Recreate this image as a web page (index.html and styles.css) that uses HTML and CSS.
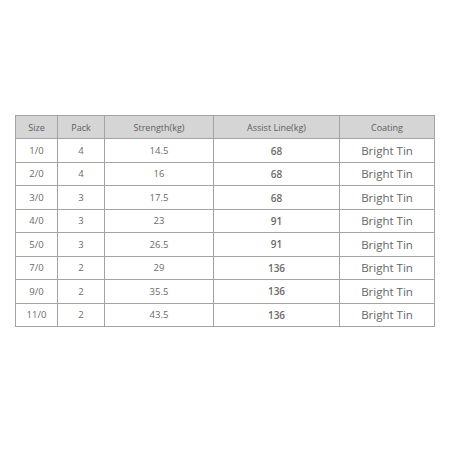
FILE: index.html
```html
<!DOCTYPE html>
<html>
<head>
<meta charset="utf-8">
<link rel="stylesheet" href="styles.css">
</head>
<body>
<div class="page">
<table class="spec">
<colgroup>
<col class="c1"><col class="c2"><col class="c3"><col class="c4"><col class="c5">
</colgroup>
<thead>
<tr><th>Size</th><th>Pack</th><th>Strength(kg)</th><th>Assist Line(kg)</th><th>Coating</th></tr>
</thead>
<tbody>
<tr><td>1/0</td><td>4</td><td>14.5</td><td class="al">68</td><td class="ct">Bright Tin</td></tr>
<tr><td>2/0</td><td>4</td><td>16</td><td class="al">68</td><td class="ct">Bright Tin</td></tr>
<tr><td>3/0</td><td>3</td><td>17.5</td><td class="al">68</td><td class="ct">Bright Tin</td></tr>
<tr><td>4/0</td><td>3</td><td>23</td><td class="al">91</td><td class="ct">Bright Tin</td></tr>
<tr><td>5/0</td><td>3</td><td>26.5</td><td class="al">91</td><td class="ct">Bright Tin</td></tr>
<tr><td>7/0</td><td>2</td><td>29</td><td class="al">136</td><td class="ct">Bright Tin</td></tr>
<tr><td>9/0</td><td>2</td><td>35.5</td><td class="al">136</td><td class="ct">Bright Tin</td></tr>
<tr><td>11/0</td><td>2</td><td>43.5</td><td class="al">136</td><td class="ct">Bright Tin</td></tr>
</tbody>
</table>
</div>
</body>
</html>
```

FILE: styles.css
```css
html, body {
  margin: 0;
  padding: 0;
  background: #ffffff;
}
.page {
  width: 452px;
  height: 452px;
  padding: 115px 0 0 15px;
  box-sizing: border-box;
  font-family: "Open Sans", "Noto Sans", sans-serif;
}
.spec {
  border-collapse: collapse;
  table-layout: fixed;
  width: 419px;
  color: #6a6a6a;
}
.c1 { width: 42px; }
.c2 { width: 47px; }
.c3 { width: 109px; }
.c4 { width: 126px; }
.c5 { width: 95px; }
.spec th, .spec td {
  border: 1px solid #a3a3a3;
  text-align: center;
  padding: 0;
  height: 22.45px;
  font-weight: normal;
  font-size: 9.5px;
  line-height: 1;
}
.spec th {
  background: #d5d5d5;
  color: #606060;
  font-size: 9px;
}
.spec td.al {
  color: #6a6a6a;
  font-size: 10px;
  font-weight: 600;
}
.spec td.ct {
  font-size: 11.5px;
  color: #666666;
}
```
